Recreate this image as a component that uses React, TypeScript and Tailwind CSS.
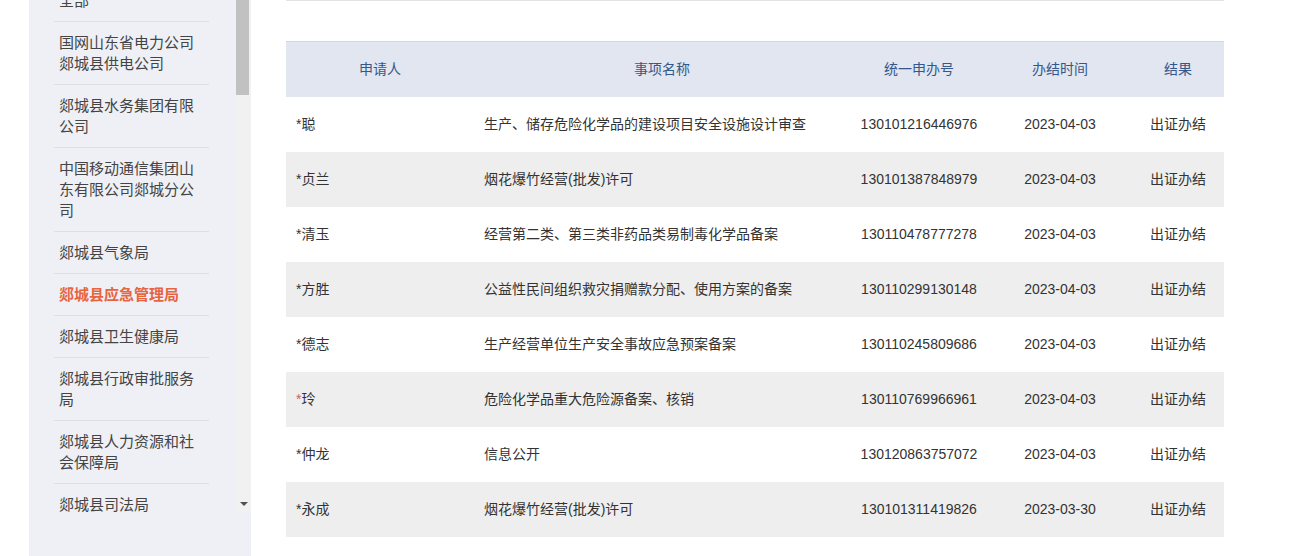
import React from 'react'

const depts = [
  { name: '全部' },
  { name: '国网山东省电力公司郯城县供电公司' },
  { name: '郯城县水务集团有限公司' },
  { name: '中国移动通信集团山东有限公司郯城分公司' },
  { name: '郯城县气象局' },
  { name: '郯城县应急管理局', active: true },
  { name: '郯城县卫生健康局' },
  { name: '郯城县行政审批服务局' },
  { name: '郯城县人力资源和社会保障局' },
  { name: '郯城县司法局' },
]

const rows = [
  { who: '聪', item: '生产、储存危险化学品的建设项目安全设施设计审查', no: '130101216446976', date: '2023-04-03' },
  { who: '贞兰', item: '烟花爆竹经营(批发)许可', no: '130101387848979', date: '2023-04-03' },
  { who: '清玉', item: '经营第二类、第三类非药品类易制毒化学品备案', no: '130110478777278', date: '2023-04-03' },
  { who: '方胜', item: '公益性民间组织救灾捐赠款分配、使用方案的备案', no: '130110299130148', date: '2023-04-03' },
  { who: '德志', item: '生产经营单位生产安全事故应急预案备案', no: '130110245809686', date: '2023-04-03' },
  { who: '玲', item: '危险化学品重大危险源备案、核销', no: '130110769966961', date: '2023-04-03', red: true },
  { who: '仲龙', item: '信息公开', no: '130120863757072', date: '2023-04-03' },
  { who: '永成', item: '烟花爆竹经营(批发)许可', no: '130101311419826', date: '2023-03-30' },
]

function Sidebar() {
  return (
    <aside className="flex w-[222px] flex-col bg-[#eef0f5]">
      <div className="flex h-[512px]">
        {/* dept list, scrolled a little */}
        <div className="ml-[25px] w-[155px] overflow-hidden">
          <ul className="-mt-[20px]">
            {depts.map((d) => (
              <li
                key={d.name}
                className={
                  d.active
                    ? 'border-b border-[#dcdfe6] px-[5px] py-[10px] text-[15px] leading-[21px] font-bold text-[#e8643f]'
                    : 'border-b border-[#dcdfe6] px-[5px] py-[10px] text-[15px] leading-[21px] text-[#444]'
                }
              >
                {d.name}
              </li>
            ))}
          </ul>
        </div>

        {/* scrollbar */}
        <div className="ml-auto flex w-[15px] flex-col justify-between bg-[#f1f1f1]">
          <div className="h-[95px] w-[13px] bg-[#c1c1c1]" />
          <div className="flex h-[17px] items-center justify-center">
            <div className="h-0 w-0 border-x-[4px] border-t-[4px] border-x-transparent border-t-[#505050]" />
          </div>
        </div>
      </div>
    </aside>
  )
}

function ResultTable() {
  return (
    <table className="w-[938px] table-fixed border-collapse text-[14px]">
      <colgroup>
        <col className="w-[188px]" />
        <col className="w-[376px]" />
        <col className="w-[138px]" />
        <col className="w-[144px]" />
        <col className="w-[92px]" />
      </colgroup>
      <thead>
        <tr className="h-[55px] border-t border-[#d3d9e4] bg-[#e1e6f0] text-[#35588a]">
          <th className="font-normal">申请人</th>
          <th className="font-normal">事项名称</th>
          <th className="font-normal">统一申办号</th>
          <th className="font-normal">办结时间</th>
          <th className="font-normal">结果</th>
        </tr>
      </thead>
      <tbody className="text-[#333]">
        {rows.map((r, i) => (
          <tr key={r.no} className={i % 2 === 1 ? 'h-[55px] bg-[#eeeeee]' : 'h-[55px] bg-white'}>
            <td className="px-[10px]">
              <span className={r.red ? 'text-[#c9605a]' : undefined}>*</span>
              {r.who}
            </td>
            <td className="px-[10px]">{r.item}</td>
            <td className="text-center">{r.no}</td>
            <td className="text-center">{r.date}</td>
            <td className="text-center">出证办结</td>
          </tr>
        ))}
      </tbody>
    </table>
  )
}

export default function App() {
  return (
    <div
      className="flex h-[556px] w-[1300px] overflow-hidden bg-white"
      style={{ fontFamily: '"Liberation Sans", "Noto Sans CJK SC", sans-serif' }}
    >
      <div className="w-[29px] shrink-0" />
      <Sidebar />
      <main className="flex-1 pl-[35px]">
        <div className="w-[938px] border-t border-[#e3e3e3]" />
        <div className="mt-[40px]">
          <ResultTable />
        </div>
      </main>
    </div>
  )
}
